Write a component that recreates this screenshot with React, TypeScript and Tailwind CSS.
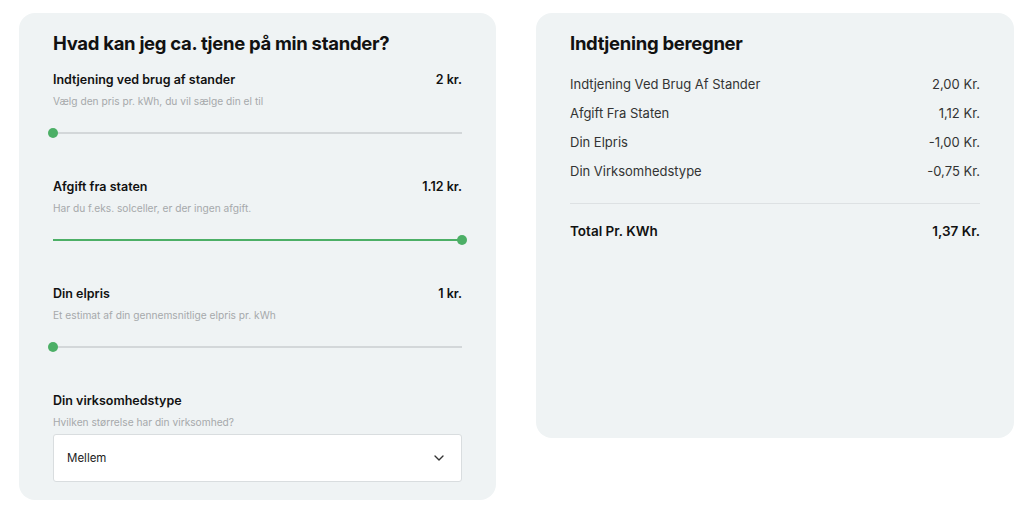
import { ChevronDown } from 'lucide-react'

interface SliderRowProps {
  label: string
  value: string
  hint: string
  percent: number
}

function SliderRow({ label, value, hint, percent }: SliderRowProps) {
  return (
    <div className="h-[107px]">
      <div className="flex items-center justify-between h-[18px]">
        <span className="text-[12.5px] font-semibold text-[#111]">{label}</span>
        <span className="text-[12.5px] font-semibold text-[#111]">{value}</span>
      </div>
      <p className="mt-[5px] text-[10.2px] text-[#a6a9ab]">{hint}</p>
      <div className="relative mt-[19px] h-[10px]">
        <div className="absolute left-0 right-0 top-[4px] h-[2px] bg-[#d3d7d9]" />
        <div className="absolute left-0 top-[4px] h-[2px] bg-[#4caf66]" style={{ width: `${percent}%` }} />
        <div
          className="absolute top-0 h-[10px] w-[10px] -ml-[5px] rounded-full bg-[#4caf66]"
          style={{ left: `${percent}%` }}
        />
      </div>
    </div>
  )
}

const rows = [
  { label: 'Indtjening Ved Brug Af Stander', value: '2,00 Kr.' },
  { label: 'Afgift Fra Staten', value: '1,12 Kr.' },
  { label: 'Din Elpris', value: '-1,00 Kr.' },
  { label: 'Din Virksomhedstype', value: '-0,75 Kr.' },
]

export default function App() {
  return (
    <div className="flex items-start gap-[40px] pl-[19px] pt-[13px] font-['Inter',sans-serif]">
      {/* Calculator inputs */}
      <div className="w-[477px] rounded-2xl bg-[#eff3f4] px-[34px] pt-[18px] pb-[18px]">
        <h2 className="text-[18.5px] font-bold leading-[24px] text-[#111] tracking-[-0.3px]">
          Hvad kan jeg ca. tjene på min stander?
        </h2>
        <div className="mt-[16px]">
          <SliderRow
            label="Indtjening ved brug af stander"
            value="2 kr."
            hint="Vælg den pris pr. kWh, du vil sælge din el til"
            percent={0}
          />
          <SliderRow
            label="Afgift fra staten"
            value="1.12 kr."
            hint="Har du f.eks. solceller, er der ingen afgift."
            percent={100}
          />
          <SliderRow
            label="Din elpris"
            value="1 kr."
            hint="Et estimat af din gennemsnitlige elpris pr. kWh"
            percent={0}
          />
        </div>
        <div>
          <div className="flex items-center h-[18px]">
            <span className="text-[12.5px] font-semibold text-[#111]">Din virksomhedstype</span>
          </div>
          <p className="mt-[5px] text-[10.2px] text-[#a6a9ab]">Hvilken størrelse har din virksomhed?</p>
          <div className="mt-[4px] flex h-[48px] items-center justify-between rounded-[3px] border border-[#d9dddf] bg-white pl-[13px] pr-[14px]">
            <span className="text-[11.5px] text-[#222]">Mellem</span>
            <ChevronDown className="h-[16px] w-[16px] text-[#333]" strokeWidth={2} />
          </div>
        </div>
      </div>

      {/* Result summary */}
      <div className="w-[478px] h-[425px] rounded-2xl bg-[#eff3f4] px-[34px] pt-[18px]">
        <h2 className="text-[18.5px] font-bold leading-[24px] text-[#111] tracking-[-0.3px]">
          Indtjening beregner
        </h2>
        <div className="mt-[21px] flex flex-col gap-[11px]">
          {rows.map((r) => (
            <div key={r.label} className="flex items-center justify-between h-[18px] text-[13px] text-[#333]">
              <span>{r.label}</span>
              <span>{r.value}</span>
            </div>
          ))}
        </div>
        <div className="mt-[22px] h-px bg-[#dde1e3]" />
        <div className="mt-[18px] flex items-center justify-between h-[18px] text-[13.5px] font-semibold text-[#111]">
          <span>Total Pr. KWh</span>
          <span>1,37 Kr.</span>
        </div>
      </div>
    </div>
  )
}
